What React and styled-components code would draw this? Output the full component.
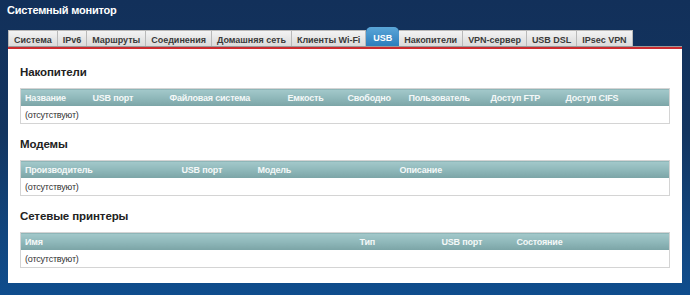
import styled, { createGlobalStyle } from 'styled-components'

const GlobalStyle = createGlobalStyle`
    html, body {
        margin: 0;
        padding: 0;
    }
    body {
        width: 690px;
        height: 295px;
        overflow: hidden;
        font-family: "Liberation Sans", Arial, sans-serif;
        background: linear-gradient(to bottom, #12305a 0%, #133560 45%, #11467f 80%, #0f4d8d 100%);
    }
`

const Page = styled.div`
    display: flex;
    flex-direction: column;
    height: 295px;
`

const Title = styled.h1`
    margin: 0;
    padding: 3px 7px 0;
    height: 22px;
    box-sizing: border-box;
    color: #fff;
    font-size: 11px;
    letter-spacing: -0.2px;
    font-weight: bold;
    line-height: 14px;
`

const TabBar = styled.div`
    display: flex;
    align-items: flex-end;
    height: 25px;
    padding: 0 8px;
`

const Tab = styled.div`
    flex-shrink: 0;
    white-space: nowrap;
    height: 17px;
    padding: 1px 5px 0;
    display: flex;
    align-items: center;
    font-size: 9px;
    letter-spacing: -0.02px;
    font-weight: bold;
    color: #3a3a3a;
    background: linear-gradient(to bottom, #f3f3f3, #d9d9d9);
    border: 1px solid #b9b9b9;
    border-bottom: none;
    border-left-width: ${p => (p.$first ? 1 : 0)}px;
    box-sizing: border-box;
    &.active {
        height: 20px;
        color: #fff;
        background: linear-gradient(to bottom, #5aa6d8, #2b7cbb);
        border: none;
        border-radius: 5px 5px 0 0;
        padding: 2px 7px 0;
    }
`

const Panel = styled.div`
    margin: 0 8px;
    height: 236px;
    background: #fff;
    border-top: 2px solid #cc2b2f;
    box-shadow: 0 -1px 0 #9a9a9a;
    padding: 16px 12px 0;
    box-sizing: border-box;
`

const SectionTitle = styled.h3`
    margin: 0 0 9px;
    font-size: 11.5px;
    letter-spacing: -0.1px;
    line-height: 14px;
    font-weight: bold;
    color: #222;
`

const Table = styled.table`
    width: 650px;
    border-collapse: collapse;
    table-layout: fixed;
    border: 1px solid #d4d4d4;
    margin-bottom: 13px;
    font-size: 9px;
    letter-spacing: -0.2px;
    line-height: 12px;
`

const HeadCell = styled.th`
    height: 17px;
    padding: 0 4px;
    text-align: left;
    color: #f4f8f8;
    font-weight: bold;
    white-space: nowrap;
    background: linear-gradient(to bottom, #a3c9cb 0%, #8fb8ba 50%, #7aa3a5 100%);
`

const Cell = styled.td`
    height: 17px;
    padding: 0 4px;
    color: #333;
`

const tabs = ['Система', 'IPv6', 'Маршруты', 'Соединения', 'Домашняя сеть', 'Клиенты Wi-Fi', 'USB', 'Накопители', 'VPN-сервер', 'USB DSL', 'IPsec VPN']

const sections = [
    {
        title: 'Накопители',
        cols: [['Название', 68], ['USB порт', 77], ['Файловая система', 118], ['Емкость', 60], ['Свободно', 61], ['Пользователь', 82], ['Доступ FTP', 75], ['Доступ CIFS', null]]
    },
    {
        title: 'Модемы',
        cols: [['Производитель', 157], ['USB порт', 76], ['Модель', 142], ['Описание', null]]
    },
    {
        title: 'Сетевые принтеры',
        cols: [['Имя', 335], ['Тип', 82], ['USB порт', 75], ['Состояние', null]]
    }
]

const App = () => {
    return (
        <Page>
            <GlobalStyle />
            <Title>Системный монитор</Title>
            <TabBar>
                {tabs.map((t, i) => (
                    <Tab key={t} $first={i === 0} className={t === 'USB' ? 'active' : ''}>{t}</Tab>
                ))}
            </TabBar>
            <Panel>
                {sections.map(s => (
                    <div key={s.title}>
                        <SectionTitle>{s.title}</SectionTitle>
                        <Table>
                            <colgroup>
                                {s.cols.map(([name, w]) => <col key={name} style={w ? { width: w } : undefined} />)}
                            </colgroup>
                            <thead>
                                <tr>
                                    {s.cols.map(([name]) => <HeadCell key={name}>{name}</HeadCell>)}
                                </tr>
                            </thead>
                            <tbody>
                                <tr>
                                    <Cell colSpan={s.cols.length}>(отсутствуют)</Cell>
                                </tr>
                            </tbody>
                        </Table>
                    </div>
                ))}
            </Panel>
        </Page>
    )
}

export default App
